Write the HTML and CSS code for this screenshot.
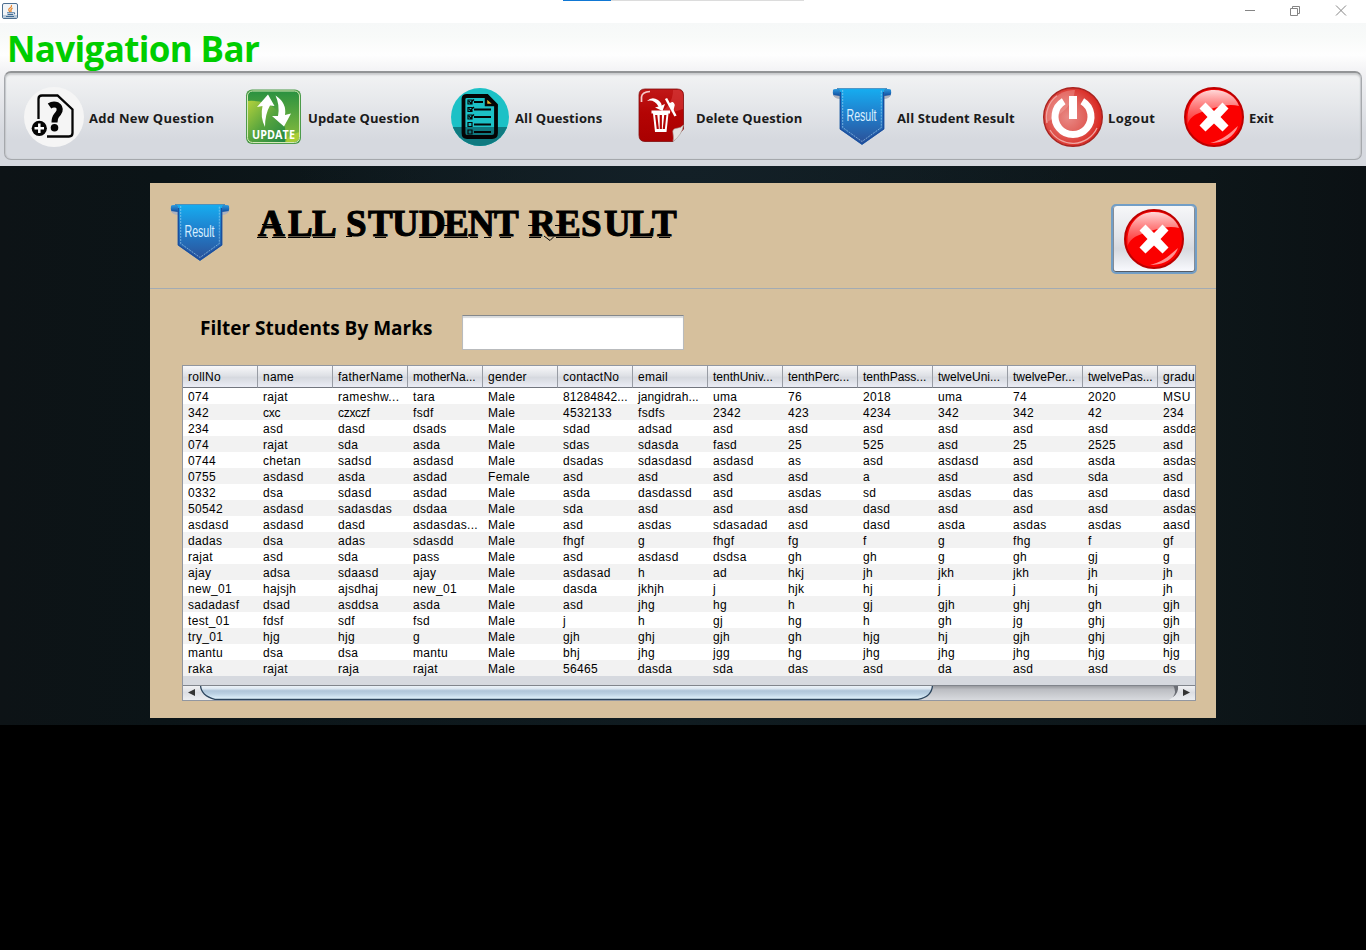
FILE: index.html
```html
<!DOCTYPE html>
<html lang="en">
<head>
<meta charset="utf-8">
<title>All Student Result</title>
<link rel="stylesheet" href="styles.css">
</head>
<body>
<svg class="defs" width="0" height="0">
  <defs>
    <linearGradient id="gRibbon" x1="0" y1="0" x2="0" y2="1"><stop offset="0" stop-color="#16adf0"/><stop offset=".45" stop-color="#2080cd"/><stop offset="1" stop-color="#2c4f96"/></linearGradient>
    <linearGradient id="gRoll" x1="0" y1="0" x2="0" y2="1"><stop offset="0" stop-color="#2d9be0"/><stop offset="1" stop-color="#0b3f93"/></linearGradient>
    <linearGradient id="gGloss" x1="0" y1="0" x2="0" y2="1"><stop offset="0" stop-color="#ffd8d8"/><stop offset="1" stop-color="#ff5050" stop-opacity=".6"/></linearGradient>
    <radialGradient id="gPower" cx=".42" cy=".5" r=".6"><stop offset="0" stop-color="#e98a86"/><stop offset=".5" stop-color="#e0605a"/><stop offset="1" stop-color="#d81f18"/></radialGradient>
    <linearGradient id="gGreen" x1="0" y1="0" x2="0" y2="1"><stop offset="0" stop-color="#2a9140"/><stop offset="1" stop-color="#8fbf3c"/></linearGradient>
    <linearGradient id="gLime" x1="0" y1="0" x2="1" y2="1"><stop offset="0" stop-color="#b5d23c"/><stop offset=".5" stop-color="#56a43e"/><stop offset="1" stop-color="#1f8442"/></linearGradient>
    <linearGradient id="gRed" x1="0" y1="0" x2="0" y2="1"><stop offset="0" stop-color="#c01818"/><stop offset=".45" stop-color="#b40404"/><stop offset="1" stop-color="#a90000"/></linearGradient>
    <clipPath id="cDisc"><circle cx="30" cy="30" r="29"/></clipPath>
    <clipPath id="cGreen"><rect x="4" y="4" width="52" height="51" rx="5"/></clipPath>
  </defs>
  <symbol id="ribbon" viewBox="0 0 60 60">
    <path d="M1 3Q0 9 4 10H9V2H4Q1 2 1 3ZM59 3Q60 9 56 10H51V2H56Q59 2 59 3Z" fill="url(#gRoll)"/>
    <path d="M1 8Q3 12 8 12V9ZM59 8Q57 12 52 12V9Z" fill="#aeb2bd"/>
    <path d="M5 1.500H55Q52 2 52 6V42L30 57.500L8 42V6Q8 2 5 1.500Z" fill="url(#gRibbon)" stroke="#3c7fb4" stroke-width=".7"/>
    <path d="M8.500 5V42L30 57L51.500 42V5" fill="none" stroke="#1b4e9f" stroke-width="1.400"/>
    <path d="M10.700 3V40.500L30 54.500L49.300 40.500V3" fill="none" stroke="#a9d9f5" stroke-width=".6" stroke-dasharray="2 1"/>
  </symbol>
  <symbol id="cross" viewBox="0 0 60 60">
    <circle cx="30" cy="30" r="29" fill="#fb0000" stroke="#bd0000" stroke-width="2"/>
    <path d="M3.500 31C4 13 16 3 30 3C43 3 52 10 55 19C43 16 30 21 24 23C14 26 7 28 3.500 37Z" fill="url(#gGloss)"/>
    <path d="M54 39C50 50 40 56 26 56C39 53 46 46 54 39Z" fill="#ff9090"/>
    <path d="M21.500 15.500L30 24L38.500 15.500L44.500 21.500L36.500 30L44.500 38.500L38.500 44.500L30 36.500L21.500 44.500L15.500 38.500L23.500 30L15.500 21.500Z" fill="#fff"/>
  </symbol>
</svg>

<header class="titlebar">
  <svg class="java" viewBox="0 0 16 16"><rect x=".5" y=".5" width="15" height="15" rx="1.500" fill="#f1f4f7" stroke="#4d6f91"/><path d="M1 12H15V15H1Z" fill="#b8c9d8"/><path d="M9.500 2Q10 4 8 5Q5.500 6.500 8 9M10.500 5Q8 6.500 9.200 9" fill="none" stroke="#e8842c" stroke-width="1.200"/><path d="M5 9.800H11.500M5.500 11.500H11M4 13.500H12M11.500 9.500Q14 9.500 12 11.500" fill="none" stroke="#416c96"/></svg>
  <div class="tabline"></div>
  <svg class="winctl" viewBox="0 0 104 12"><path d="M0 5.500H10M45.500 3.500H52.500V10.500H45.500ZM47.500 3V1.500H54.500V8.500H53M91 .500L101 10.500M101 .500L91 10.500" fill="none" stroke="#858585"/></svg>
</header>

<section class="navwrap">
  <h1 class="navtitle">Navigation Bar</h1>
  <nav class="toolbar">
    <a class="item add"><svg class="icon" viewBox="0 0 60 60"><circle cx="30" cy="30" r="30" fill="#f5f5f5"/><path d="M14.500 32V12Q14.500 8.500 18 8.500H33.500L48.500 22.500V46Q48.500 49.500 45 49.500H23" fill="none" stroke="#050505" stroke-width="2.300"/><path d="M25.500 19Q29 16.500 33 18Q36.500 20 35.500 24Q34.500 26.500 32.500 28.500Q30.500 31 30.500 35.500" fill="none" stroke="#050505" stroke-width="6"/><circle cx="30.500" cy="40.800" r="3.800" fill="#050505"/><circle cx="15.300" cy="41.300" r="7.600" fill="#050505"/><path d="M15.300 36.500V46M10.500 41.300H20" stroke="#fff" stroke-width="2.500"/></svg><span>Add New Question</span></a>
    <a class="item update"><svg class="icon" viewBox="0 0 60 60"><rect x="3" y="2.500" width="55" height="54.500" rx="6" fill="#4c9b4a"/><g clip-path="url(#cGreen)"><rect x="4" y="4" width="53" height="52" fill="url(#gGreen)"/><path d="M4 14Q32 12 40 34Q44 44 42 56H4Z" fill="url(#gLime)"/><path d="M43 56Q43 48 57 45V56Z" fill="#a9cc37"/></g><rect x="4.500" y="4" width="52" height="51.500" rx="5" fill="none" stroke="#d5e9b8"/><path d="M25 7.500L14 20L19.500 19Q17 30 22 40Q22 27 27 18.500L31.500 19Z" fill="#fff"/><path d="M32.500 8.500Q44 16 42 28L48 26.500L41 39.500L29 29L35 29Q37 18 32.500 8.500Z" fill="#fff"/><text x="9" y="51.500" font-family="Open Sans" font-weight="700" font-size="12" textLength="43" lengthAdjust="spacingAndGlyphs" fill="#fff">UPDATE</text></svg><span>Update Question</span></a>
    <a class="item all"><svg class="icon" viewBox="0 0 60 60"><g clip-path="url(#cDisc)"><rect width="60" height="60" fill="#1cc1c6"/><rect y="40" width="60" height="20" fill="#107a80"/></g><path d="M17 9H37L46 18V46Q46 50 42 50H17Q13.500 50 13.500 46V12Q13.500 9 17 9Z" fill="none" stroke="#050505" stroke-width="3.800"/><path d="M36 10V18H45Z" fill="#dfb82e" stroke="#050505" stroke-width="2.500"/><path d="M24 15H33M24 22.500H41M24 30H41M24 37.500H41M24 45H41" stroke="#050505" stroke-width="2"/><path d="M18 13H22V17H18ZM18 20.500H22V24.500H18ZM18 28H22V32H18ZM18 35.500H22V39.500H18ZM18 43H22V47H18ZM19 14L20.500 16L24 12.500M19 21.500L20.500 23.500L24 20M19 29L20.500 31L24 27.500" fill="none" stroke="#050505" stroke-width="1.200"/></svg><span>All Questions</span></a>
    <a class="item delete"><svg class="icon" viewBox="0 0 60 60"><path d="M14 2H46Q52.500 2 52.500 8V42L42 54.500H14Q8 54.500 8 48V8Q8 2 14 2Z" fill="url(#gRed)" stroke="#820b0b" stroke-width=".8"/><path d="M42 3H48Q52 4 52 9V22Q40 26 24 28Q42 20 42 3Z" fill="#d44" opacity=".5"/><path d="M10.500 15V10Q11 5 19 4.500" fill="none" stroke="#f6caca" stroke-width="1.700"/><path d="M42 54.500Q43 52 42 46Q41 42 45 41.500Q50 41 52.500 38Q51 48 42 54.500Z" fill="#e4e2e0" stroke="#a9a4a0" stroke-width=".6"/><path d="M16 14Q21 9 27 13Q31 16 30.500 18.500L34 17L31.500 24L24 20.500L27.500 19.500Q23 12 16 14Z" fill="#fff"/><path d="M35 11.500L44.500 29" fill="none" stroke="#fff" stroke-width="2.500"/><path d="M39 17Q42 14 43 18L42 22Z" fill="#fff" stroke="#fff" stroke-width="1.500"/><path d="M20.500 23.500H39V26.500H37.500L35.500 45H24L22 26.500H20.500Z" fill="#fff"/><path d="M25.200 28L26.800 42M29.800 28V42M34.300 28L32.800 42" stroke="#b40505" stroke-width="2.200"/></svg><span>Delete Question</span></a>
    <a class="item result"><svg class="icon ribbon" viewBox="0 0 60 60"><use href="#ribbon"/><text x="14.500" y="33.500" textLength="30" lengthAdjust="spacingAndGlyphs">Result</text></svg><span>All Student Result</span></a>
    <a class="item logout"><svg class="icon" viewBox="0 0 60 60"><circle cx="30" cy="30" r="29.300" fill="url(#gPower)" stroke="#a82420" stroke-width="1.400"/><path d="M9 13Q20 2 32 3Q30 22 4 35Q2 23 9 13Z" fill="#f2aaa6" opacity=".4"/><path d="M4 36A26.500 26.500 0 0 1 14 8.800M7 43A26.500 26.500 0 0 0 54 41" fill="none" stroke="#efa5a1" stroke-width="1.300"/><path d="M20.700 14.200A18 18 0 1 0 39.300 14.200" fill="none" stroke="#fff" stroke-width="7"/><path d="M26 9H34V32H26Z" fill="#fff"/></svg><span>Logout</span></a>
    <a class="item exit"><svg class="icon"><use href="#cross"/></svg><span>Exit</span></a>
  </nav>
</section>

<main class="desktop">
  <section class="panel">
    <div class="panelhead">
      <svg class="badge ribbon" viewBox="0 0 60 60"><use href="#ribbon"/><text x="14.500" y="33.500" textLength="30" lengthAdjust="spacingAndGlyphs">Result</text></svg>
      <svg class="heading" viewBox="0 0 424 46">
        <text y="33" x="2 32 56 78 90 112 136 163 188 212 238 262 273 300 325 348 374 396">ALL STUDENT RESULT</text>
        <path d="M1 34.500H12M16 34.500H30M32 34.500H54M57 34.500H79M90 33.500H96M119 34.500H130M163 34.500H180M188 34.500H212M214 34.500H222M228 34.500H235M244 34.500H255M273 34.500H285M300 34.500H324M374 34.500H396M403 34.500H414M6 21.500H25M187 22.500H196M272 22.500H283M299 22.500H308"/>
        <path d="M288 33L294 37.500L298 33.500"/>
      </svg>
      <button class="close"><svg class="icon"><use href="#cross"/></svg></button>
    </div>
    <div class="filter"><label for="marks">Filter Students By Marks</label><input id="marks" type="text"></div>
    <div class="gridbox">
      <table>
        <thead><tr><th>rollNo<th>name<th>fatherName<th class="cut">motherNa...<th>gender<th>contactNo<th>email<th class="cut">tenthUniv...<th class="cut">tenthPerc...<th class="cut">tenthPass...<th class="cut">twelveUni...<th class="cut">twelvePer...<th class="cut">twelvePas...<th>gradu</tr></thead>
        <tbody>
        <tr><td>074<td>rajat<td>rameshw...<td>tara<td>Male<td class="cut">81284842...<td class="cut">jangidrah...<td>uma<td>76<td>2018<td>uma<td>74<td>2020<td>MSU
        <tr><td>342<td class="tight">cxc<td class="tight">czxczf<td>fsdf<td>Male<td>4532133<td>fsdfs<td>2342<td>423<td>4234<td>342<td>342<td>42<td>234
        <tr><td>234<td>asd<td>dasd<td>dsads<td>Male<td>sdad<td>adsad<td>asd<td>asd<td>asd<td>asd<td>asd<td>asd<td>asdda
        <tr><td>074<td>rajat<td>sda<td>asda<td>Male<td>sdas<td>sdasda<td>fasd<td>25<td>525<td>asd<td>25<td>2525<td>asd
        <tr><td>0744<td>chetan<td>sadsd<td>asdasd<td>Male<td>dsadas<td>sdasdasd<td>asdasd<td>as<td>asd<td>asdasd<td>asd<td>asda<td>asdas
        <tr><td>0755<td>asdasd<td>asda<td>asdad<td>Female<td>asd<td>asd<td>asd<td>asd<td>a<td>asd<td>asd<td>sda<td>asd
        <tr><td>0332<td>dsa<td>sdasd<td>asdad<td>Male<td>asda<td>dasdassd<td>asd<td>asdas<td>sd<td>asdas<td>das<td>asd<td>dasd
        <tr><td>50542<td>asdasd<td>sadasdas<td>dsdaa<td>Male<td>sda<td>asd<td>asd<td>asd<td>dasd<td>asd<td>asd<td>asd<td>asdas
        <tr><td>asdasd<td>asdasd<td>dasd<td>asdasdas...<td>Male<td>asd<td>asdas<td>sdasadad<td>asd<td>dasd<td>asda<td>asdas<td>asdas<td>aasd
        <tr><td>dadas<td>dsa<td>adas<td>sdasdd<td>Male<td>fhgf<td>g<td>fhgf<td>fg<td>f<td>g<td>fhg<td>f<td>gf
        <tr><td>rajat<td>asd<td>sda<td>pass<td>Male<td>asd<td>asdasd<td>dsdsa<td>gh<td>gh<td>g<td>gh<td>gj<td>g
        <tr><td>ajay<td>adsa<td>sdaasd<td>ajay<td>Male<td>asdasad<td>h<td>ad<td>hkj<td>jh<td>jkh<td>jkh<td>jh<td>jh
        <tr><td>new_01<td>hajsjh<td>ajsdhaj<td>new_01<td>Male<td>dasda<td>jkhjh<td>j<td>hjk<td>hj<td>j<td>j<td>hj<td>jh
        <tr><td>sadadasf<td>dsad<td>asddsa<td>asda<td>Male<td>asd<td>jhg<td>hg<td>h<td>gj<td>gjh<td>ghj<td>gh<td>gjh
        <tr><td>test_01<td>fdsf<td>sdf<td>fsd<td>Male<td>j<td>h<td>gj<td>hg<td>h<td>gh<td>jg<td>ghj<td>gjh
        <tr><td>try_01<td>hjg<td>hjg<td>g<td>Male<td>gjh<td>ghj<td>gjh<td>gh<td>hjg<td>hj<td>gjh<td>ghj<td>gjh
        <tr><td>mantu<td>dsa<td>dsa<td>mantu<td>Male<td>bhj<td>jhg<td>jgg<td>hg<td>jhg<td>jhg<td>jhg<td>hjg<td>hjg
        <tr><td>raka<td>rajat<td>raja<td>rajat<td>Male<td>56465<td>dasda<td>sda<td>das<td>asd<td>da<td>asd<td>asd<td>ds
        </tbody>
      </table>
      <svg class="scroll" viewBox="0 0 1012 15">
        <defs>
          <linearGradient id="gTrack" x1="0" y1="0" x2="0" y2="1"><stop offset="0" stop-color="#8f9196"/><stop offset=".3" stop-color="#bcbec3"/><stop offset="1" stop-color="#d8dade"/></linearGradient>
          <linearGradient id="gThumb" x1="0" y1="0" x2="0" y2="1"><stop offset="0" stop-color="#f2f7fb"/><stop offset=".25" stop-color="#dce7f1"/><stop offset=".4" stop-color="#aec5d9"/><stop offset=".6" stop-color="#bad0e2"/><stop offset="1" stop-color="#e4f6ff"/></linearGradient>
          <linearGradient id="gEnd" x1="0" y1="0" x2="0" y2="1"><stop offset="0" stop-color="#f3f4f6"/><stop offset=".5" stop-color="#dcdee3"/><stop offset="1" stop-color="#eceef1"/></linearGradient>
        </defs>
        <rect width="1012" height="15" fill="url(#gTrack)"/>
        <path d="M0 0H17Q18 11 32 15H0Z" fill="url(#gEnd)"/>
        <path d="M1012 0H994Q996 10 986 15H1012Z" fill="url(#gEnd)"/>
        <path d="M990 0H995Q996 8 990 12Q994 7 990 0Z" fill="#6b6e75"/>
        <path d="M17.500 0Q18 11 32 14.500H735Q749 12 749.500 0Z" fill="url(#gThumb)"/>
        <path d="M17.500 0Q18 11 32 14.300H735Q749 12 749.500 0" fill="none" stroke="#2c455d" stroke-width="1.300"/>
        <path d="M0 .500H1012" stroke="#81858c"/>
        <path d="M5 7.500L12 4V11Z" fill="#333"/><path d="M1007 7.500L1000 4V11Z" fill="#333"/>
      </svg>
    </div>
  </section>
</main>
</body>
</html>
```
FILE: styles.css
```css
* { box-sizing: border-box; }
body { margin: 0; height: 950px; overflow: hidden; background: #000; font-family: "Open Sans", sans-serif; }
.defs { display: block; height: 0; }
.titlebar { position: relative; height: 23px; background: #fff; }
.java { position: absolute; left: 2px; top: 3px; width: 16px; height: 16px; }
.tabline { width: 241px; height: 1px; margin-left: 563px; background: linear-gradient(90deg, #0f77d4 48px, #dcdcdc 48px); }
.winctl { position: absolute; left: 1245px; top: 5px; width: 104px; height: 12px; }
.navwrap { height: 143px; padding: 0 4px 6px; background: linear-gradient(#f6f8f8 0, #f8faf9 14px, #fefefe 32px, #f3f3f5 48px, #d6d9df 110px); }
.navtitle { height: 48px; margin: 0; padding-left: 3px; font-size: 35px; line-height: 51px; color: #00cd00; white-space: nowrap; letter-spacing: -0.65px; }
.toolbar { display: flex; height: 89px; padding: 14px 0 0 19px; border: 1px solid #a5a8ac; border-top: 2px solid #929496; border-radius: 7px; background: linear-gradient(#f2f3f4, #e6e8eb 30px, #d6d9df 66px); box-shadow: inset 0 2px 2px #c9cbcd, inset 1px 0 1px #c4c6ca, inset -1px 0 1px #c4c6ca; }
.item { display: flex; align-items: flex-start; gap: 5px; font-weight: 700; font-size: 13px; line-height: 62px; color: #1b1b1b; white-space: nowrap; letter-spacing: 0.1px; }
.icon { display: block; flex: none; width: 60px; height: 60px; }
.add { width: 219px; letter-spacing: 0.28px; }
.update { width: 207px; }
.all { width: 181px; }
.delete { width: 201px; }
.result { width: 211px; }
.logout { width: 141px; letter-spacing: 0.4px; }
.ribbon text { font: 400 17px "Liberation Sans Narrow", "Liberation Sans", sans-serif; letter-spacing: 0; fill: #d9efff; }
.desktop { height: 559px; padding: 17px 150px 0; background: radial-gradient(ellipse at 50% 0, #132027 0, transparent 40%), linear-gradient(90deg, #0d1316, #0b1417 12%, #101c21 50%, #0d1619 88%, #0b1114); }
.panel { height: 535px; background: #d6c09d; }
.panelhead { display: flex; align-items: flex-start; height: 106px; padding: 20px 19px 0 20px; border-bottom: 1px solid #a3abb3; }
.badge { flex: none; width: 60px; height: 60px; margin-top: -0.5px; }
.heading { flex: none; width: 424px; height: 46px; margin-left: 26px; overflow: visible; }
.heading text { font: 700 37px "Liberation Serif", serif; stroke: #000; stroke-width: 1.1px; }
.heading path { fill: none; stroke: #000; stroke-width: 1px; }
.close { width: 86px; height: 70px; margin-top: 1px; margin-left: auto; padding: 3px 11px; border: 2px solid #729ec6; border-radius: 5px; background: linear-gradient(#f6f7f9, #e3e5ea 45%, #d6d9df 65%, #fafbff); box-shadow: inset 0 -1px #555c66, inset 1px 0 #858c96, inset -1px 0 #858c96; }
.filter { display: flex; height: 76px; padding: 26px 0 0 50px; }
.filter label { width: 262px; font-weight: 700; font-size: 19px; line-height: 26px; white-space: nowrap; }
.filter input { width: 222px; height: 35px; margin: 0; border: 1px solid #b9bbbd; border-top: 1px solid #85888b; background: #fff; box-shadow: inset 0 2px 1px #d9dbdd; }
.gridbox { width: 1014px; height: 336px; margin-left: 32px; overflow: hidden; border: 1px solid #9297a1; background: #d6d9df; font: 12px "Liberation Sans", Arial, sans-serif; letter-spacing: 0.33px; }
table { width: 1050px; table-layout: fixed; border-collapse: separate; border-spacing: 0; }
th { width: 75px; height: 22px; padding: 1px 0 0 5px; overflow: hidden; border-right: 1px solid #989ca4; border-bottom: 1px solid #72767e; background: linear-gradient(#f8f8fa, #dfe1e6 45%, #d6d9df 55%, #ebedf5); font-weight: 400; text-align: left; line-height: 20px; white-space: nowrap; letter-spacing: 0.25px; }
td { height: 16px; padding: 2px 0 0 5px; overflow: hidden; line-height: 14px; white-space: nowrap; background: #fff; }
tr:nth-child(even) td { background: #f2f2f2; }
th.cut { letter-spacing: 0; }
td.cut { letter-spacing: 0.12px; }
.tight { letter-spacing: -0.3px; }
.scroll { display: block; width: 1012px; height: 15px; margin-top: 9px; }
```
